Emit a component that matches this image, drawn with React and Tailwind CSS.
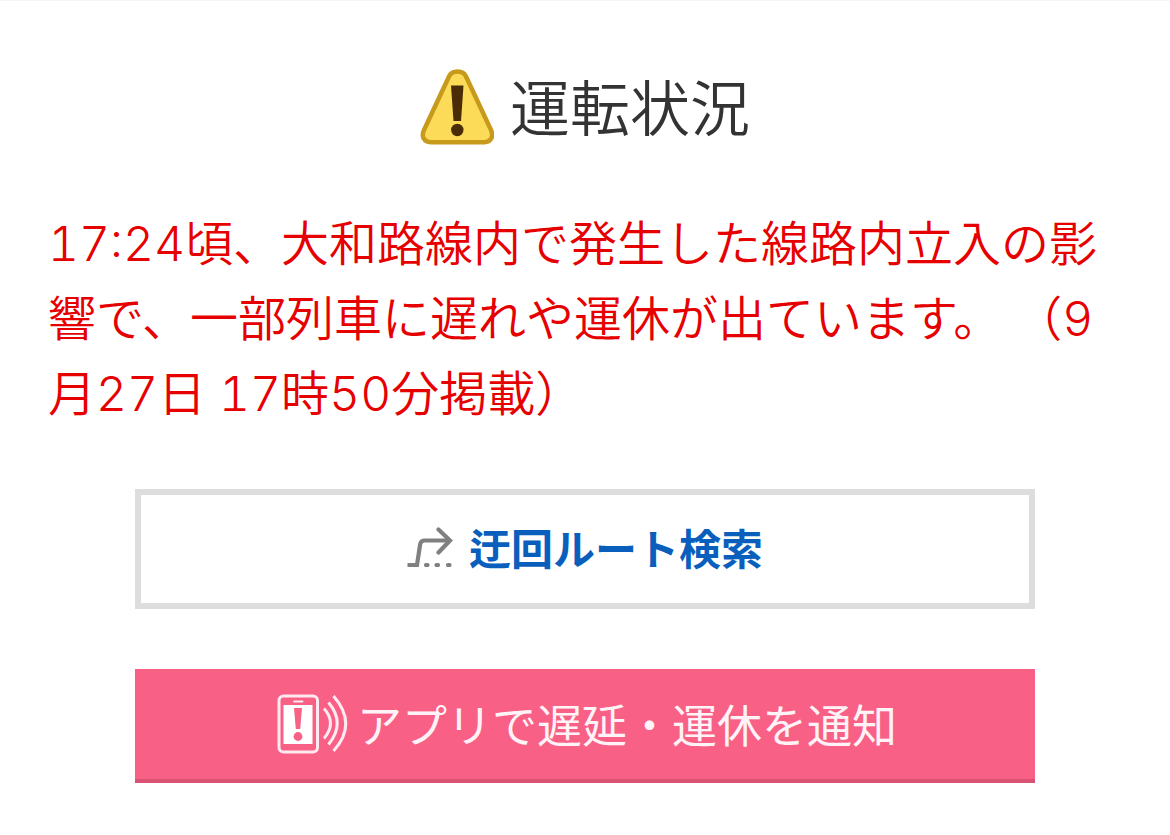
function WarningIcon() {
  return (
    <svg className="h-[76px] w-[74px] shrink-0" viewBox="0 0 74 76" aria-hidden="true">
      <path
        d="M29 7.5 C32 0.8 43 0.8 46 7.5 L71 61 C74 68 70.5 73.2 64.500 73.2 H10.5 C4.5 73.2 0.8 68 4 61 Z"
        fill="#fbdb58"
        stroke="#c79a1c"
        strokeWidth="4.500"
        strokeLinejoin="round"
      />
      <path d="M31 16.500 H43.500 L41 52 H33.500 Z" fill="#4a2c06" />
      <circle cx="37.300" cy="61" r="6.2" fill="#4a2c06" />
    </svg>
  );
}

function DetourIcon() {
  return (
    <svg className="h-[40px] w-[46px] shrink-0" viewBox="0 0 46 40" fill="none" stroke="#808080" strokeWidth="4.200" aria-hidden="true">
      <path d="M0.500 38 H10 L13.2 17 Q14 13.5 17.5 13.5 H43" />
      <path d="M31.500 2.500 L43 13.5 L31.500 25.5" strokeLinecap="round" />
      <path d="M19 38 H20.500 M29.500 38 H31 M41 38 H42.500" strokeLinecap="round" />
    </svg>
  );
}

function PhoneAlertIcon() {
  return (
    <svg className="h-[60px] w-[72px] shrink-0" viewBox="0 0 72 60" fill="none" stroke="#ffeaf1" strokeWidth="3" aria-hidden="true">
      <rect x="2" y="2" width="38.500" height="56" rx="4.500" />
      <path d="M17 7.500 H25.500" strokeWidth="2" strokeLinecap="round" />
      <rect x="6.500" y="11" width="29" height="39" fill="#fff" stroke="none" />
      <path d="M17 14 H25 L23.200 35 H18.800 Z" fill="#f96085" stroke="none" />
      <circle cx="21" cy="42.500" r="4.400" fill="#f96085" stroke="none" />
      <path d="M47 14.500 Q60 29 47 44.500" />
      <path d="M51.500 8.500 Q69 29 51.500 50.500" />
      <path d="M56.500 2 Q81 30 56.500 57" />
    </svg>
  );
}

export default function App() {
  return (
    <main
      lang="ja"
      className="border-t border-[#f5f5f5] bg-white px-12 pt-[68px] pb-[52px] font-['Noto_Sans_CJK_JP',sans-serif]"
    >
      <h1 className="flex items-start justify-center gap-4 text-[60px] leading-[72px] font-[350] text-[#333]">
        <WarningIcon />
        運転状況
      </h1>
      <p className="mt-[61px] font-['Inter','Noto_Sans_CJK_JP',sans-serif] text-[48px] leading-[75px] font-[350] text-[#e60000] tabular-nums">
        17:24頃、大和路線内で発生した線路内立入の影響で、一部列車に遅れや運休が出ています。 （9月27日 17時50分掲載）
      </p>
      <div className="mx-auto mt-[58px] flex w-full max-w-[900px] flex-col gap-[60px]">
        <a
          href="#detour"
          className="flex items-center justify-center gap-4 border-6 border-[#ddd] pt-[22px] pb-[26px] text-[42px] leading-[60px] font-bold text-[#0a5fbd]"
        >
          <DetourIcon />
          迂回ルート検索
        </a>
        <a
          href="#app"
          className="flex items-center justify-center gap-2 border-b-4 border-[#da5173] bg-[#f96085] py-[25px] pl-1 text-[45px] leading-[60px] text-[#fff3f7]"
        >
          <PhoneAlertIcon />
          アプリで遅延・運休を通知
        </a>
      </div>
    </main>
  );
}
